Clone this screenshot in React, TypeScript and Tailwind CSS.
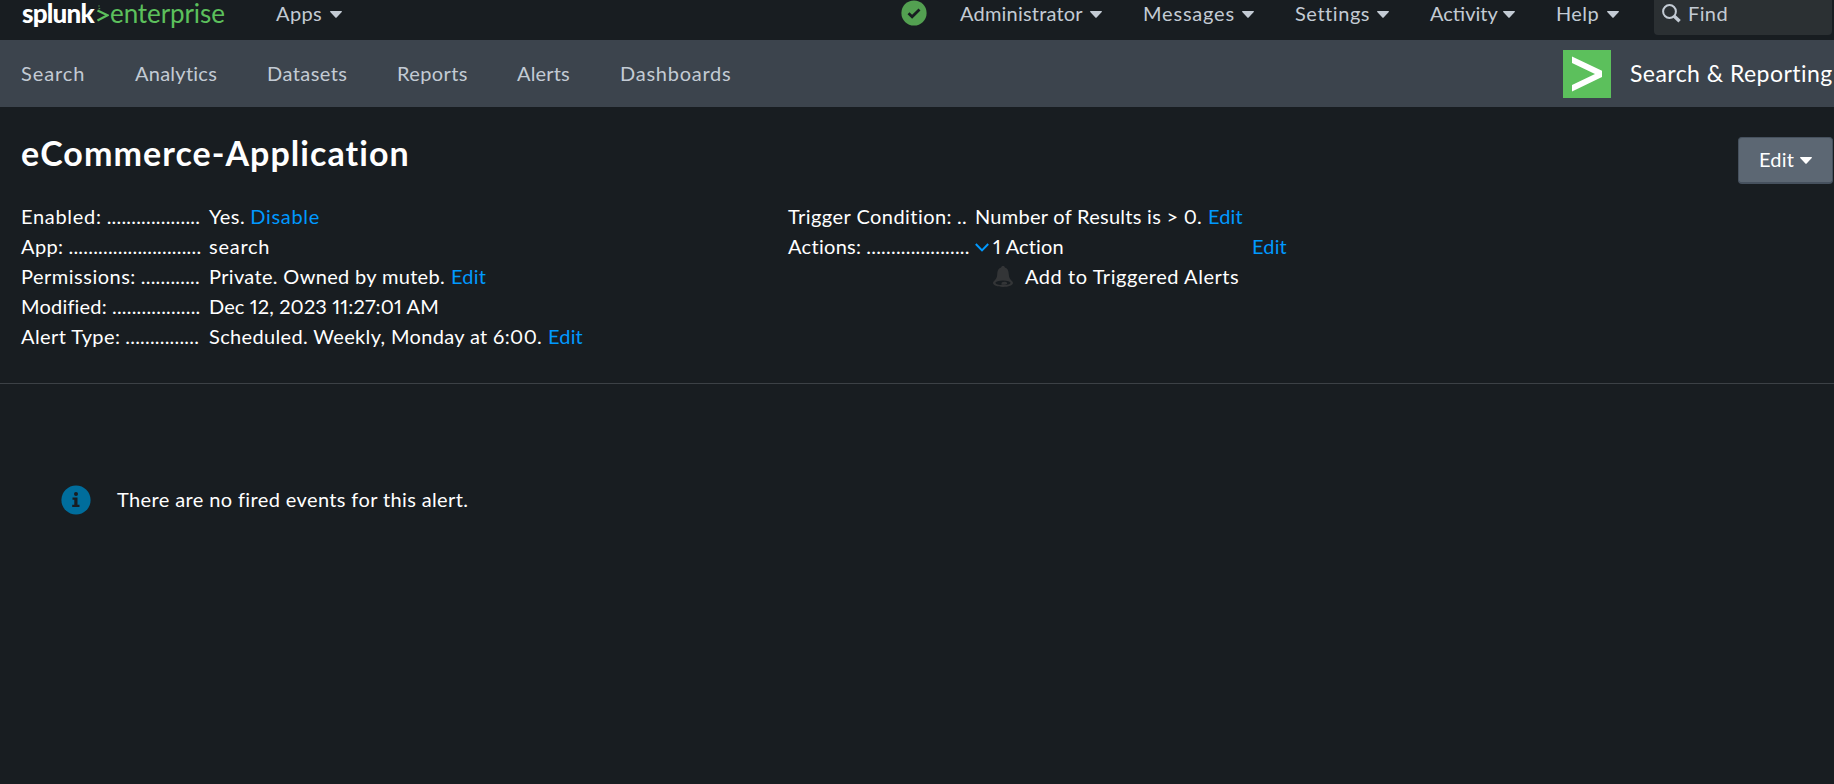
import React from "react";

function Caret({ className = "" }: { className?: string }) {
  return (
    <svg viewBox="0 0 12 7" className={`h-[7px] w-[12px] shrink-0 ${className}`} fill="currentColor">
      <path d="M0.6 0h10.8c.5 0 .7.5.4.9L6.6 6.6a.8.8 0 0 1-1.2 0L.2.9C-.1.5.1 0 .6 0z" />
    </svg>
  );
}

function MenuItem({ label, text, box }: { label: string; text: string; box: string }) {
  return (
    <a className={`flex shrink-0 items-center ${box}`}>
      <span className={`shrink-0 ${text}`}>{label}</span>
      <Caret className="mt-[3px]" />
    </a>
  );
}

function TopBar() {
  return (
    <header className="flex h-[40px] shrink-0 text-[#c3cbd4]">
      <div className="flex w-[254px] shrink-0 items-center pl-[22px] leading-[27px]">
        <span className="w-[75px] shrink-0 pb-[13px] text-[26px] font-black tracking-[-0.8px] text-white">splunk</span>
        <svg viewBox="0 0 12 18" className="mb-[12px] mr-[1px] h-[18px] w-[12px] shrink-0" fill="none" stroke="#5cc05c">
          <path d="M0.5 5.5 10.5 10.3 0.5 15.6" strokeWidth="2.2" />
          <path d="M1.2 1h1.6M1.6 3.2l1.6.6" strokeWidth="1.2" opacity=".7" />
        </svg>
        <span className="pb-[13px] text-[26px] tracking-[-0.1px] text-[#5cc05c]">enterprise</span>
      </div>
      <nav className="flex h-[26px] flex-1 items-center pl-[22px] text-[20px] leading-[26px]">
        <MenuItem label="Apps" box="w-[625px]" text="w-[54px] tracking-[0.4px]" />
        <svg viewBox="0 0 26 26" className="h-[26px] w-[26px] shrink-0">
          <circle cx="13" cy="13" r="12.6" fill="#53a051" />
          <path d="M7.5 13.3l3.6 3.4 7.4-7.2" fill="none" stroke="#181d21" strokeWidth="2.8" />
        </svg>
        <div className="w-[33px] shrink-0" />
        <MenuItem label="Administrator" box="w-[183px]" text="w-[130px] tracking-[0.2px]" />
        <MenuItem label="Messages" box="w-[152px]" text="w-[99px] tracking-[0.8px]" />
        <MenuItem label="Settings" box="w-[135px]" text="w-[82px] tracking-[0.55px]" />
        <MenuItem label="Activity" box="w-[126px]" text="w-[73px]" />
        <MenuItem label="Help" box="w-[98px]" text="w-[51px] tracking-[0.4px]" />
      </nav>
      <div className="mr-[2px] flex h-[35px] w-[178px] shrink-0 rounded-b-[4px] bg-[#2b3033] pl-[8px] text-[20px] leading-[26px]">
        <svg viewBox="0 0 19 19" className="mt-[4px] h-[19px] w-[19px] shrink-0" fill="none" stroke="currentColor">
          <circle cx="7.5" cy="7.5" r="6.4" strokeWidth="2" />
          <path d="M12 12l5.6 5.3" strokeWidth="3.4" />
        </svg>
        <span className="ml-[7px] tracking-[0.4px]">Find</span>
      </div>
    </header>
  );
}

function AppBar() {
  return (
    <div className="flex h-[67px] shrink-0 items-center bg-[#3c444d] pl-[21px] text-[20px] text-[#c3cbd4]">
      <nav className="flex flex-1 pb-[2px]">
        <span className="w-[114px] shrink-0 tracking-[0.9px]">Search</span>
        <span className="w-[132px] shrink-0 tracking-[0.25px]">Analytics</span>
        <span className="w-[130px] shrink-0 tracking-[0.45px]">Datasets</span>
        <span className="w-[120px] shrink-0 tracking-[0.4px]">Reports</span>
        <span className="w-[103px] shrink-0 tracking-[0.15px]">Alerts</span>
        <span className="tracking-[0.75px]">Dashboards</span>
      </nav>
      <div className="flex w-[271px] shrink-0 items-center text-white">
        <svg viewBox="0 0 48 48" className="h-[48px] w-[48px] shrink-0">
          <path fill="#5cc05c" d="M0 0h48v48H0z" />
          <path fill="#fff" d="M9 6.5 39 20.8v6.2L9 41.500v-6.600L32 24 9 13z" />
        </svg>
        <span className="ml-[19px] whitespace-nowrap pb-[1px] text-[23px] tracking-[0.45px]">Search &amp; Reporting</span>
      </div>
    </div>
  );
}

type RowProps = { label: string; dots: number; width: string; tracking: string; children?: React.ReactNode };

function Row({ label, dots, width, tracking, children }: RowProps) {
  return (
    <div className="flex h-[30px] whitespace-nowrap leading-[30px]">
      <div className={`mr-[8px] flex shrink-0 ${width}`}>
        <span className={`mr-[5px] shrink-0 ${tracking}`}>{label}</span>
        <span className="tracking-[0.2px]">{".".repeat(dots)}</span>
      </div>
      {children}
    </div>
  );
}

function Link({ children, className = "tracking-[0.15px]" }: { children: string; className?: string }) {
  return <a className={`text-[#0099ff] ${className}`}>{children}</a>;
}

export default function App() {
  return (
    <div className="flex h-[784px] w-[1834px] flex-col overflow-hidden bg-[#181d21] font-['Lato',sans-serif] text-[20px] proportional-nums text-white">
      <TopBar />
      <AppBar />
      <section className="flex h-[92px] shrink-0 justify-between pl-[21px] pr-[1px]">
        <h1 className="pt-[26px] text-[34px] font-bold leading-[40px] tracking-[1.05px]">eCommerce-Application</h1>
        <button className="mt-[30px] flex h-[47px] w-[95px] items-center rounded-[4px] border border-b-2 border-[#46515e] bg-[#5c6773] pl-[20px]">
          <span className="w-[41px] shrink-0 pb-[2px] text-left tracking-[0.2px]">Edit</span>
          <Caret />
        </button>
      </section>
      <section className="flex h-[185px] shrink-0 border-b border-[#3c4146] pl-[21px] pt-[2px]">
        <div className="w-[767px] shrink-0">
          <Row label="Enabled:" dots={19} width="w-[180px]" tracking="tracking-[0.7px]">
            <span className="tracking-[0.5px]">Yes.</span>
            <Link className="ml-[5px] tracking-[0.7px]">Disable</Link>
          </Row>
          <Row label="App:" dots={27} width="w-[180px]" tracking="tracking-[0.4px]">
            <span className="tracking-[0.75px]">search</span>
          </Row>
          <Row label="Permissions:" dots={12} width="w-[180px]" tracking="tracking-[0.5px]">
            <span className="tracking-[0.33px]">Private. Owned by muteb.</span>
            <Link className="ml-[6px] tracking-[0.15px]">Edit</Link>
          </Row>
          <Row label="Modified:" dots={18} width="w-[180px]" tracking="tracking-[0.2px]">
            <span className="tracking-[0.12px]">Dec 12, 2023 11:27:01 AM</span>
          </Row>
          <Row label="Alert Type:" dots={15} width="w-[180px]" tracking="tracking-[0.4px]">
            <span className="tracking-[0.35px]">Scheduled. Weekly, Monday at 6:00.</span>
            <Link className="ml-[6px] tracking-[0.15px]">Edit</Link>
          </Row>
        </div>
        <div>
          <Row label="Trigger Condition:" dots={2} width="w-[179px]" tracking="tracking-[0.45px]">
            <span className="tracking-[0.27px]">Number of Results is &gt; 0.</span>
            <Link className="ml-[6px] tracking-[0.15px]">Edit</Link>
          </Row>
          <Row label="Actions:" dots={21} width="w-[179px]" tracking="tracking-[0.3px]">
            <svg viewBox="0 0 14 9" className="mr-[4px] mt-[12px] h-[9px] w-[14px]" fill="none" stroke="#0099ff" strokeWidth="2">
              <path d="M0.8 1 7 7.4 13.2 1" />
            </svg>
            <span className="w-[259px] tracking-[0.15px]">1 Action</span>
            <Link>Edit</Link>
          </Row>
          <div className="flex h-[30px] pl-[205px] leading-[30px]">
            <svg viewBox="0 0 20 21" className="mr-[12px] mt-[5px] h-[21px] w-[20px]" fill="#333537">
              <path d="M10 0c1.200 0 1.800.7 1.900 1.600C15 2.500 15.500 5 15.800 8.500c.2 3 1 4.500 2.600 6 1 .9 1.600 1.600 1.600 2.600C20 19.500 15.500 21 10 21S0 19.500 0 17.100c0-1 .6-1.700 1.600-2.600 1.600-1.500 2.400-3 2.600-6C4.500 5 5 2.500 8.100 1.600 8.200.7 8.800 0 10 0z" />
              <ellipse cx="10" cy="16.800" rx="7.600" ry="2.300" fill="#181d21" />
              <path d="M8.500 17.500c0-1.200 1.500-2 3.500-1.700 1.600.2 2.600 1 2 2.200-1.500.8-3.800 1-5.500.8z" />
            </svg>
            <span className="tracking-[0.55px]">Add to Triggered Alerts</span>
          </div>
        </div>
      </section>
      <section className="flex items-center pl-[61px] pt-[101px]">
        <svg viewBox="0 0 30 30" className="h-[30px] w-[30px] shrink-0">
          <circle cx="15" cy="15" r="14.600" fill="#006d9c" />
          <circle cx="15" cy="9" r="2" fill="#181d21" />
          <path fill="#181d21" d="M11.500 12.500h5v7.200h2V22h-7.300v-2.300h2.100v-4.900h-1.800z" />
        </svg>
        <span className="ml-[26px] pb-[2px] leading-[28px] tracking-[0.38px]">There are no fired events for this alert.</span>
      </section>
    </div>
  );
}
